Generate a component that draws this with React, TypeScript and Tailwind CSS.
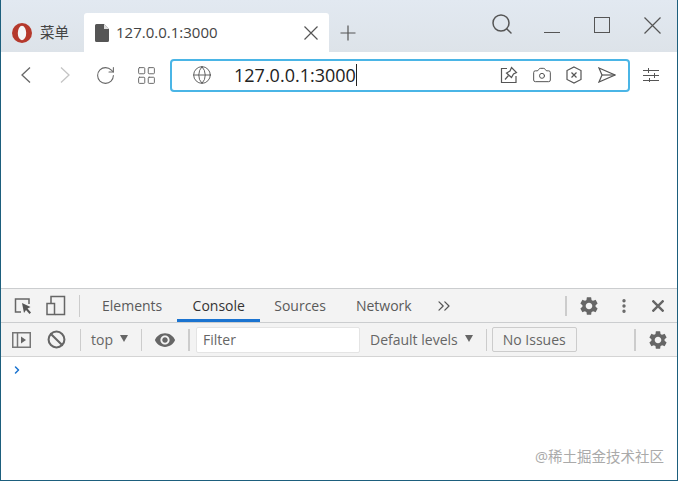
import React from 'react';
import { RotateCw, Search, Globe, Camera, Ban, EllipsisVertical, ChevronsRight, ChevronRight, LayoutGrid } from 'lucide-react';
import { MdSettings, MdVisibility } from 'react-icons/md';

const FONT = "font-['Open_Sans','Noto_Sans_CJK_SC',sans-serif]";

function OperaLogo() {
  return (
    <svg width="20" height="20" viewBox="0 0 20 20">
      <circle cx="10" cy="10" r="10" fill="#b5392c" />
      <ellipse cx="10" cy="10" rx="4.2" ry="7.2" fill="#f4f6f8" />
    </svg>
  );
}

function FileIcon() {
  return (
    <svg width="14" height="18" viewBox="0 0 14 18">
      <path d="M1.5 0H9l5 5v11.5A1.5 1.5 0 0 1 12.5 18h-11A1.5 1.5 0 0 1 0 16.5v-15A1.5 1.5 0 0 1 1.5 0z" fill="#555" />
      <path d="M9 0v5h5z" fill="#ddd" />
    </svg>
  );
}

function Cross({ size, width = 1.2, color = '#555' }: { size: number; width?: number; color?: string }) {
  return (
    <svg width={size} height={size} viewBox={`0 0 ${size} ${size}`} fill="none" stroke={color} strokeWidth={width} className="shrink-0">
      <path d={`M0.5 0.5L${size - 0.5} ${size - 0.5}M${size - 0.5} 0.5L0.5 ${size - 0.5}`} />
    </svg>
  );
}

function Chevron({ left, color }: { left?: boolean; color: string }) {
  return (
    <svg width="12" height="16" viewBox="0 0 12 16" fill="none" stroke={color} strokeWidth="1.3" className="shrink-0">
      <path d={left ? 'M10 0.5L2 8L10 15.5' : 'M2 0.5L10 8L2 15.5'} />
    </svg>
  );
}

function PinIcon() {
  return (
    <svg width="18" height="18" viewBox="0 0 18 18" fill="none" stroke="#555" strokeWidth="1.2" className="shrink-0">
      <path d="M7 2.5H1.5V16.5H16V10" />
      <path d="M11.5 1.5L16.5 6.5L13.5 8L11.5 11.5L6.5 7L10 5z" />
      <path d="M8.5 9.5L5 13.5" />
    </svg>
  );
}

function ShieldX() {
  return (
    <svg width="16" height="18" viewBox="0 0 16 18" fill="none" stroke="#555" strokeWidth="1.2" className="shrink-0">
      <path d="M8 1L15 4.5V13.5L8 17L1 13.5V4.5z" />
      <path d="M5.5 6.5L10.5 11.5M10.5 6.5L5.5 11.5" />
    </svg>
  );
}

function SendIcon() {
  return (
    <svg width="18" height="16" viewBox="0 0 18 16" fill="none" stroke="#555" strokeWidth="1.2" className="shrink-0">
      <path d="M1 1L17 8L1 15L4 8z" />
      <path d="M4 8H17" />
    </svg>
  );
}

function SlidersIcon() {
  return (
    <svg width="16" height="14" viewBox="0 0 16 14" fill="none" stroke="#555" strokeWidth="1" className="shrink-0">
      <path d="M0 2.5H16M0 7.500H16M0 12.500H16" />
      <path d="M5.500 0V5M11.500 5V10M6.500 10V14" />
    </svg>
  );
}

function InspectIcon() {
  return (
    <svg width="18" height="18" viewBox="0 0 18 18" fill="none" className="shrink-0">
      <path d="M7 15H1.5V2H15V7" stroke="#666" strokeWidth="1.5" />
      <path d="M8 6L16.5 10L13.5 11.5L17 15.5L15.5 17L12 13L10 16z" fill="#555" />
    </svg>
  );
}

function DeviceIcon() {
  return (
    <svg width="20" height="21" viewBox="0 0 20 21" fill="none" stroke="#666" strokeWidth="1.5" className="shrink-0">
      <path d="M5 8V1.5H18.5V19.5H9" />
      <rect x="1" y="8.5" width="7.5" height="11" />
    </svg>
  );
}

function SidebarIcon() {
  return (
    <svg width="19" height="16" viewBox="0 0 19 16" fill="none" className="shrink-0">
      <rect x="0.75" y="0.75" width="17.5" height="14.5" stroke="#777" strokeWidth="1.5" />
      <path d="M5.5 1V15" stroke="#777" strokeWidth="1.5" />
      <path d="M9 4.5L14 8L9 11.5z" fill="#666" />
    </svg>
  );
}

function Caret() {
  return <span className="ml-[7px] mt-[-3px] h-0 w-0 border-x-[4.5px] border-t-[7px] border-x-transparent border-t-[#666]" />;
}

function Divider({ className }: { className: string }) {
  return <span className={`w-px h-[22px] bg-[#ccc] shrink-0 ${className}`} />;
}

export default function App() {
  return (
    <div className={`w-[678px] h-[481px] relative flex flex-col overflow-hidden bg-white border-x border-b border-[#1d5f7d] ${FONT}`}>
      {/* tab strip */}
      <div className="h-[52px] shrink-0 flex items-end bg-gradient-to-b from-[#e2e9f1] to-[#dde3e9] pl-[11px]">
        <div className="w-[72px] h-[39px] flex items-center gap-[8px] text-[14.5px] text-[#444]">
          <OperaLogo />
          <span>菜单</span>
        </div>
        <div className="w-[245px] h-[39px] flex items-center bg-white rounded-t-[3px] pl-[11px] pr-[11px] text-[15px] text-[#444]">
          <FileIcon />
          <span className="ml-[7px]">127.0.0.1:3000</span>
          <span className="ml-auto"><Cross size={14} /></span>
        </div>
        <div className="h-[39px] flex items-center ml-[11px]">
          <svg width="16" height="16" viewBox="0 0 16 16" stroke="#555" strokeWidth="1.2">
            <path d="M8 0.5V15.5M0.5 8H15.5" />
          </svg>
        </div>
        <div className="flex-1 self-start flex items-start pt-[12px] pl-[134px] text-[#555]">
          <Search className="w-[24px] h-[24px]" strokeWidth={1.5} />
          <span className="ml-[30px] mt-[20px] w-[16px] h-px bg-[#555]" />
          <span className="ml-[34px] mt-[5px] w-[16px] h-[16px] border border-[#555]" />
          <span className="ml-[34px] mt-[5px]"><Cross size={17} /></span>
        </div>
      </div>

      {/* address bar */}
      <div className="h-[46px] shrink-0 flex items-center pl-[19px] text-[#666]">
        <Chevron left color="#666" />
        <span className="ml-[27px]"><Chevron color="#c4c4c4" /></span>
        <RotateCw className="ml-[24px] w-[21px] h-[21px]" strokeWidth={1.2} />
        <LayoutGrid className="ml-[20px] w-[21px] h-[21px]" strokeWidth={1.1} />
        <div className="ml-[13px] w-[460px] h-[33px] shrink-0 flex items-center rounded-[4px] border-2 border-[#4ab5e6] pl-[20px] pr-[12px]">
          <Globe className="w-[20px] h-[20px] text-[#555]" strokeWidth={1.1} />
          <span className="ml-[22px] text-[18px] text-[#222] border-r border-[#222] leading-[22px]">127.0.0.1:3000</span>
          <div className="ml-auto flex items-center">
            <PinIcon />
            <Camera className="ml-[14px] w-[20px] h-[20px] text-[#555]" strokeWidth={1.2} />
            <span className="ml-[14px]"><ShieldX /></span>
            <span className="ml-[16px]"><SendIcon /></span>
          </div>
        </div>
        <span className="ml-[13px]"><SlidersIcon /></span>
      </div>

      {/* page */}
      <div className="flex-1" />

      {/* devtools tabs */}
      <div className="h-[35px] shrink-0 flex items-center bg-[#f3f3f3] border-t border-b border-[#cbcdcf] pl-[13px] text-[14px] text-[#5a5a5a]">
        <InspectIcon />
        <span className="ml-[14px]"><DeviceIcon /></span>
        <Divider className="ml-[13px]" />
        <span className="ml-[22px]">Elements</span>
        <div className="ml-[15px] w-[83px] h-full flex items-center justify-center text-[#333] border-b-[3px] border-[#1a73d0] pt-[3px]">Console</div>
        <span className="ml-[14px]">Sources</span>
        <span className="ml-[30px]">Network</span>
        <ChevronsRight className="ml-[22px] w-[20px] h-[20px] text-[#555]" strokeWidth={1.5} />
        <span className="w-[2px] h-[20px] bg-[#ccc] ml-[111px]" />
        <MdSettings className="ml-[11px] w-[22px] h-[22px] text-[#666]" />
        <EllipsisVertical className="ml-[15px] w-[18px] h-[18px] text-[#666]" strokeWidth={2.5} />
        <span className="ml-[19px]"><Cross size={12} width={2.4} color="#666" /></span>
      </div>

      {/* console toolbar */}
      <div className="h-[34px] shrink-0 flex items-center bg-[#f3f3f3] border-b border-[#d4d4d4] pl-[11px] text-[14px] text-[#666]">
        <SidebarIcon />
        <Ban className="ml-[16px] w-[19px] h-[19px] text-[#666]" strokeWidth={2.6} />
        <Divider className="ml-[14px]" />
        <span className="ml-[10px]">top</span>
        <Caret />
        <Divider className="ml-[13px]" />
        <MdVisibility className="ml-[12px] w-[22px] h-[22px] text-[#666]" />
        <span className="w-[2px] h-[22px] bg-[#ccc] ml-[12px]" />
        <div className="ml-[6px] w-[164px] h-[26px] flex items-center bg-white border border-[#e4e4e4] rounded-[2px] pl-[6px]">Filter</div>
        <span className="ml-[10px]">Default levels</span>
        <Caret />
        <Divider className="ml-[13px]" />
        <div className="ml-[5px] w-[85px] h-[25px] flex items-center justify-center border border-[#ccc] rounded-[2px]">No Issues</div>
        <span className="w-[2px] h-[22px] bg-[#ccc] ml-[57px]" />
        <MdSettings className="ml-[11px] w-[22px] h-[22px] text-[#666]" />
      </div>

      {/* console */}
      <div className="h-[123px] shrink-0 pl-[10px] pt-[5px]">
        <ChevronRight className="w-[12px] h-[16px] text-[#1a73d0]" strokeWidth={3} />
      </div>

      {/* watermark */}
      <span className="absolute right-[13px] bottom-[13px] text-[14.5px] leading-[20px] text-[#aaa]">@稀土掘金技术社区</span>
    </div>
  );
}
